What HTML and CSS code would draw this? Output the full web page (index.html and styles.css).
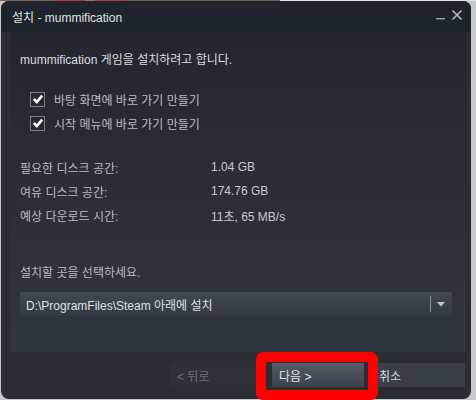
FILE: index.html
```html
<!DOCTYPE html>
<html lang="ko">
<head>
<meta charset="utf-8">
<link rel="stylesheet" href="styles.css">
</head>
<body>
<div class="desk"></div>
<div class="window">
  <div class="titlebar">
    <span class="title">설치 - mummification</span>
    <div class="controls">
      <svg class="min" width="10" height="12" viewBox="0 0 10 12"><rect x="0" y="9" width="9" height="1.4" fill="#9aa0a8"/></svg>
      <svg class="close" width="12" height="12" viewBox="0 0 12 12"><path d="M1.5 1.5 L10.5 10.5 M10.5 1.5 L1.5 10.5" stroke="#b9bec5" stroke-width="1.5"/></svg>
    </div>
  </div>
  <div class="body">
    <div class="panel">
      <div class="intro">mummification 게임을 설치하려고 합니다.</div>
      <div class="checks">
        <div class="check"><span class="box"><svg width="12" height="12" viewBox="0 0 12 12"><path d="M1.8 6 L4.8 9 L10.2 2.6" fill="none" stroke="#ffffff" stroke-width="2.6"/></svg></span><span>바탕 화면에 바로 가기 만들기</span></div>
        <div class="check"><span class="box"><svg width="12" height="12" viewBox="0 0 12 12"><path d="M1.8 6 L4.8 9 L10.2 2.6" fill="none" stroke="#ffffff" stroke-width="2.6"/></svg></span><span>시작 메뉴에 바로 가기 만들기</span></div>
      </div>
      <div class="info">
        <div class="row"><span class="label">필요한 디스크 공간:</span><span class="val">1.04 GB</span></div>
        <div class="row"><span class="label">여유 디스크 공간:</span><span class="val">174.76 GB</span></div>
        <div class="row"><span class="label">예상 다운로드 시간:</span><span class="val">11초, 65 MB/s</span></div>
      </div>
      <div class="choose">설치할 곳을 선택하세요.</div>
      <div class="select">
        <span class="seltext">D:\ProgramFiles\Steam 아래에 설치</span>
        <span class="sep"></span>
        <svg class="arrow" width="8" height="5" viewBox="0 0 8 5"><path d="M0 0 L8 0 L4 4.5 Z" fill="#c3c7cc"/></svg>
      </div>
    </div>
  </div>
  <div class="footer">
    <div class="btn back">&lt; 뒤로</div>
    <div class="btn next">다음 &gt;</div>
    <div class="btn cancel">취소</div>
  </div>
</div>
<div class="highlight"></div>
</body>
</html>
```

FILE: styles.css
```css
html, body {
  margin: 0;
  padding: 0;
}
body {
  width: 476px;
  height: 400px;
  background: #c9c9c9;
  font-family: "Liberation Sans", "Noto Sans CJK KR", sans-serif;
  font-size: 12px;
  overflow: hidden;
  position: relative;
}
.desk {
  height: 1px;
  background: linear-gradient(90deg, #7a6a55 0 55px, #b23a36 55px 85px, #8a7a60 85px 95px, #b23a36 95px 125px, #6d604e 125px 280px, #e0e0e0 280px);
}
.window {
  margin-left: 1px;
  width: 470px;
  height: 398px;
  background: #2a2d33;
  border-radius: 8px;
  overflow: hidden;
  display: flex;
  flex-direction: column;
}
.titlebar {
  height: 31px;
  flex: none;
  background: #1f232b;
  display: flex;
  align-items: center;
  justify-content: space-between;
  padding: 0 8px 0 11px;
}
.title {
  color: #dfe3e8;
  font-size: 12px;
  margin-top: -1px;
}
.controls {
  display: flex;
  align-items: center;
  gap: 5px;
  margin-top: -4px;
}
.body {
  height: 320px;
  flex: none;
  padding: 0 5px 0 9px;
}
.panel {
  height: 320px;
  box-sizing: border-box;
  background: linear-gradient(180deg, #23262d 0%, #2b2e35 50%, #31353d 100%);
  padding: 20px 10px 0 10px;
  color: #b8bcc1;
}
.intro {
  color: #dcdfe2;
  line-height: 16px;
  height: 16px;
}
.checks {
  margin-top: 19px;
  padding-left: 10px;
}
.check {
  height: 24px;
  display: flex;
  align-items: center;
  gap: 9px;
}
.box {
  width: 13px;
  height: 13px;
  border: 1px solid #7b7f86;
  background: #25282e;
  display: flex;
  align-items: center;
  justify-content: center;
}
.info {
  margin-top: 20px;
}
.row {
  height: 24px;
  display: flex;
  align-items: center;
}
.label {
  width: 191px;
}
.val {
  color: #c7cbcf;
}
.choose {
  margin-top: 38px;
  line-height: 16px;
  height: 16px;
}
.select {
  margin-top: 11px;
  height: 24px;
  width: 432px;
  box-sizing: border-box;
  background: linear-gradient(180deg, #424854 0%, #393e48 60%, #343840 100%);
  display: flex;
  align-items: center;
  padding: 0 7px 0 6px;
  color: #dfe2e5;
}
.seltext {
  flex: 1;
}
.sep {
  width: 1px;
  height: 16px;
  background: #8d9299;
  margin-right: 6px;
}
.footer {
  flex: 1;
  display: flex;
  align-items: flex-start;
  padding: 11px 0 0 169px;
}
.btn {
  height: 24px;
  box-sizing: border-box;
  display: flex;
  align-items: center;
  padding-left: 7px;
}
.back {
  width: 96px;
  background: #2e3238;
  color: #6b7078;
}
.next {
  margin-left: 6px;
  width: 92px;
  background: linear-gradient(180deg, #555b67 0%, #464b55 60%, #3d414a 100%);
  color: #e4e7ea;
}
.cancel {
  margin-left: 5px;
  width: 96px;
  padding-left: 10px;
  background: #3a3e46;
  color: #d6d9dc;
}
.highlight {
  position: absolute;
  left: 256px;
  top: 352px;
  width: 122px;
  height: 48px;
  box-sizing: border-box;
  border: 10px solid #ff0000;
  border-radius: 7px;
}
```
